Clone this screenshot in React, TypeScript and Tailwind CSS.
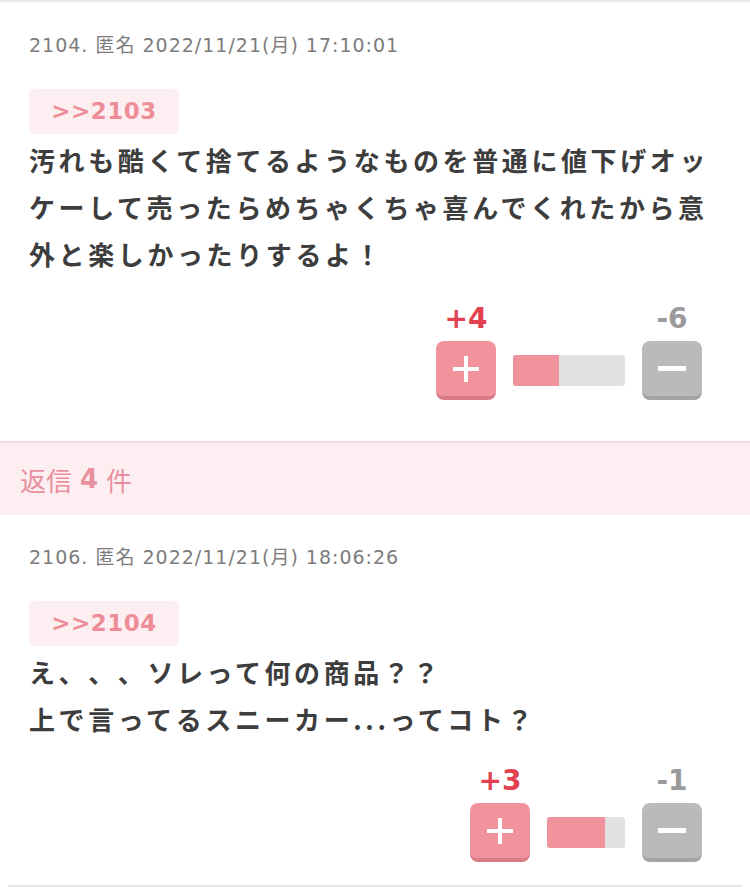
import React from "react";

const jp = { fontFamily: '"Noto Sans CJK JP", "Noto Sans", sans-serif' };
const wide = { fontFamily: '"DejaVu Sans", "Noto Sans CJK JP", sans-serif' };

function Vote({ plus, minus, barW, ratio }: { plus: string; minus: string; barW: number; ratio: number }) {
  return (
    <div className="flex justify-end pr-[48px]">
      <div className="flex items-end">
        <div className="flex w-[60px] flex-col items-center">
          <div className="text-[28px] font-bold leading-[30px] text-[#e2414f]" style={wide}>{plus}</div>
          <div className="mt-[7px] flex h-[59px] w-[60px] items-center justify-center rounded-[8px] border-b-[4px] border-[#d97a85] bg-[#f0939d]">
            <div className="relative h-[26px] w-[26px]">
              <div className="absolute left-0 top-[11px] h-[4px] w-[26px] bg-white" />
              <div className="absolute left-[11px] top-0 h-[26px] w-[4px] bg-white" />
            </div>
          </div>
        </div>
        <div className="mx-[17px] mb-[14px] flex h-[31px] overflow-hidden rounded-[3px] bg-[#e1e1e1]" style={{ width: barW }}>
          <div className="h-full bg-[#f0939d]" style={{ width: `${ratio * 100}%` }} />
        </div>
        <div className="flex w-[60px] flex-col items-center">
          <div className="text-[28px] font-bold leading-[30px] text-[#9a9a9a]" style={wide}>{minus}</div>
          <div className="mt-[7px] flex h-[59px] w-[60px] items-center justify-center rounded-[8px] border-b-[4px] border-[#a3a3a3] bg-[#bababa]">
            <div className="h-[5px] w-[28px] bg-white" />
          </div>
        </div>
      </div>
    </div>
  );
}

function Post({
  meta,
  tag,
  lines,
  children,
}: {
  meta: string;
  tag: string;
  lines: string[];
  children: React.ReactNode;
}) {
  return (
    <div className="pl-[29px]">
      <div className="whitespace-nowrap text-[19px] leading-[28px] tracking-[1px] text-[#7c7c7c]" style={wide}>{meta}</div>
      <div className="mt-[30px] flex">
        <div className="flex h-[45px] w-[150px] items-center justify-center rounded-[6px] bg-[#fdeef1] text-[23px] font-bold tracking-[0.5px] text-[#ee8d98]" style={wide}>
          {tag}
        </div>
      </div>
      <div className="mt-[2px] pr-[20px] text-[26px] font-bold leading-[47px] tracking-[3.6px] text-[#3d3d3d] [text-spacing-trim:space-all]" style={jp}>
        {lines.map((l, i) => (
          <div key={i} className="whitespace-nowrap">{l}</div>
        ))}
      </div>
      {children}
    </div>
  );
}

export default function App() {
  return (
    <div className="w-[750px] bg-white" style={jp}>
      <div className="border-t-[2px] border-[#e9e9e9] pt-[29px] pb-[41px]">
        <Post
          meta="2104. 匿名 2022/11/21(月) 17:10:01"
          tag=">>2103"
          lines={[
            "汚れも酷くて捨てるようなものを普通に値下げオッ",
            "ケーして売ったらめちゃくちゃ喜んでくれたから意",
            "外と楽しかったりするよ！",
          ]}
        >
          <div className="mt-[27px] -ml-[29px]">
            <Vote plus="+4" minus="-6" barW={112} ratio={0.41} />
          </div>
        </Post>
      </div>
      <div className="flex h-[74px] items-center border-t-[2px] border-[#f6d9df] bg-[#fdeef2] pl-[20px] text-[26px] text-[#e8909e]">
        <span>返信</span>
        <span className="mx-[8px] font-bold" style={wide}>4</span>
        <span>件</span>
      </div>
      <div className="pt-[28px] pb-[23px]">
        <Post
          meta="2106. 匿名 2022/11/21(月) 18:06:26"
          tag=">>2104"
          lines={["え、、、ソレって何の商品？？", "上で言ってるスニーカー...ってコト？"]}
        >
          <div className="mt-[24px] -ml-[29px]">
            <Vote plus="+3" minus="-1" barW={78} ratio={0.74} />
          </div>
        </Post>
      </div>
      <div className="mx-[8px] h-[2px] bg-[#e6e6e6]" />
    </div>
  );
}
